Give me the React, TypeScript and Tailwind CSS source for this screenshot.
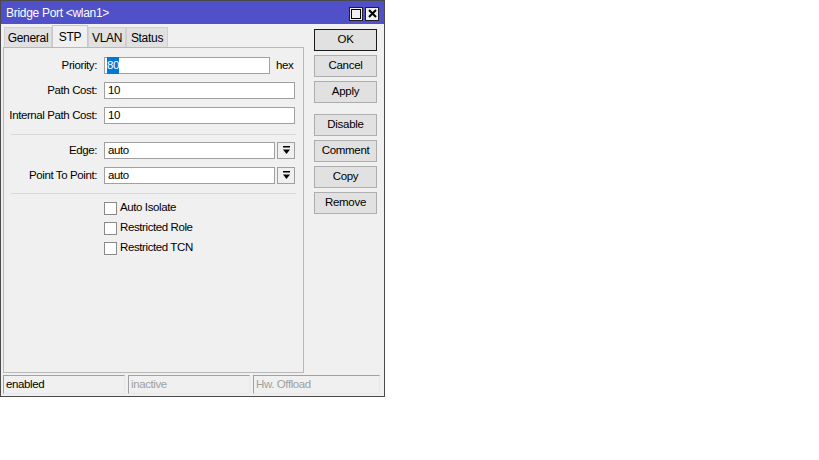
import React from "react";

const font = { fontFamily: '"Liberation Sans", Arial, sans-serif' };

function Drop() {
  return (
    <div className="w-[18px] h-[17px] border border-[#a0a0a0] bg-[#f0f0f0] flex items-center justify-center">
      <svg width="9" height="9" viewBox="0 0 9 9">
        <rect x="1" y="0" width="7" height="1.5" fill="#000" />
        <path d="M1 3.5 H8 L4.5 8 Z" fill="#000" />
      </svg>
    </div>
  );
}

function Btn({ label, def }: { label: string; def?: boolean }) {
  return (
    <div
      className={`h-[22px] w-[63px] flex items-center justify-center bg-[#e1e1e1] border ${
        def ? "border-[#1a1a1a]" : "border-[#adadad]"
      } text-[11.5px] tracking-[-0.3px] text-black`}
    >
      {label}
    </div>
  );
}

function Check({ label }: { label: string }) {
  return (
    <div className="flex items-center h-[20px] pl-[100px]">
      <div className="w-[13px] h-[13px] border border-[#8a8a8a] bg-white" />
      <span className="ml-[3px] text-[11.5px] tracking-[-0.4px]">{label}</span>
    </div>
  );
}

export default function App() {
  return (
    <div className="w-[819px] h-[460px] bg-white relative" style={font}>
      <div className="w-[385px] h-[397px] bg-[#f0f0f0] border border-[#4a4a4a] flex flex-col">
        {/* title bar */}
        <div className="h-[23px] bg-[#5050c8] flex items-center pl-[5px] pr-[5px]">
          <span className="text-white text-[12px] tracking-[-0.3px] flex-1">Bridge Port &lt;wlan1&gt;</span>
          <div className="flex gap-[2px] mt-[2px]">
            <div className="w-[14px] h-[14px] bg-[#f0f0f0] border border-[#202020] flex items-center justify-center">
              <div className="w-[10px] h-[10px] border border-black" />
            </div>
            <div className="w-[14px] h-[14px] bg-[#f0f0f0] border border-[#202020] flex items-center justify-center">
              <svg width="9" height="9" viewBox="0 0 9 9">
                <path d="M1 1 L8 8 M8 1 L1 8" stroke="#000" strokeWidth="2" />
              </svg>
            </div>
          </div>
        </div>
        {/* body */}
        <div className="flex flex-1 pl-[2px]">
          <div className="flex flex-col w-[301px]">
            <div className="flex items-end h-[23px] pl-[1px] text-[12px] tracking-[-0.3px]">
              <div className="h-[20px] w-[48px] flex items-center justify-center bg-[#e1e1e1] border border-b-0 border-[#d0d0d0]">General</div>
              <div className="h-[22px] w-[36px] flex items-center justify-center bg-[#f0f0f0] border border-b-0 border-[#c8c8c8]">STP</div>
              <div className="h-[20px] w-[38px] flex items-center justify-center bg-[#e1e1e1] border border-b-0 border-[#d0d0d0]">VLAN</div>
              <div className="h-[20px] w-[42px] flex items-center justify-center bg-[#e1e1e1] border border-b-0 border-[#d0d0d0]">Status</div>
            </div>
            <div className="h-[326px] border border-[#b8b8b8] bg-[#f0f0f0] pt-[9px] text-[11.5px] tracking-[-0.4px] text-black">
              <div className="flex items-center h-[17px]">
                <div className="w-[94px] text-right pr-[1px]">Priority:</div>
                <div className="ml-[6px] w-[166px] h-[17px] bg-white border border-[#a0a0a0] flex items-center pl-[2px]">
                  <span className="bg-[#0078d7] text-white">80</span>
                </div>
                <span className="ml-[6px]">hex</span>
              </div>
              <div className="flex items-center h-[17px] mt-[8px]">
                <div className="w-[94px] text-right pr-[1px]">Path Cost:</div>
                <div className="ml-[6px] w-[191px] h-[17px] bg-white border border-[#a0a0a0] flex items-center pl-[3px]">10</div>
              </div>
              <div className="flex items-center h-[17px] mt-[8px]">
                <div className="w-[94px] text-right pr-[1px]">Internal Path Cost:</div>
                <div className="ml-[6px] w-[191px] h-[17px] bg-white border border-[#a0a0a0] flex items-center pl-[3px]">10</div>
              </div>
              <div className="ml-[7px] w-[285px] h-px bg-[#d7d7d7] mt-[10px]" />
              <div className="flex items-center h-[17px] mt-[7px]">
                <div className="w-[94px] text-right pr-[1px]">Edge:</div>
                <div className="ml-[6px] w-[171px] h-[17px] bg-white border border-[#a0a0a0] flex items-center pl-[3px]">auto</div>
                <div className="ml-[2px]"><Drop /></div>
              </div>
              <div className="flex items-center h-[17px] mt-[8px]">
                <div className="w-[94px] text-right pr-[1px]">Point To Point:</div>
                <div className="ml-[6px] w-[171px] h-[17px] bg-white border border-[#a0a0a0] flex items-center pl-[3px]">auto</div>
                <div className="ml-[2px]"><Drop /></div>
              </div>
              <div className="ml-[7px] w-[285px] h-px bg-[#d7d7d7] mt-[9px]" />
              <div className="mt-[4px]">
                <Check label="Auto Isolate" />
                <Check label="Restricted Role" />
                <Check label="Restricted TCN" />
              </div>
            </div>
          </div>
          <div className="ml-[10px] pt-[5px] flex flex-col gap-[4px]">
            <Btn label="OK" def />
            <Btn label="Cancel" />
            <Btn label="Apply" />
            <div className="h-[3px]" />
            <Btn label="Disable" />
            <Btn label="Comment" />
            <Btn label="Copy" />
            <Btn label="Remove" />
          </div>
        </div>
        {/* status bar */}
        <div className="flex gap-[3px] pl-[2px] pb-[2px] text-[11.5px] tracking-[-0.4px]">
          <div className="w-[122px] h-[19px] border border-[#a0a0a0] border-r-[#e8e8e8] border-b-[#e8e8e8] flex items-center pl-[2px] text-black">enabled</div>
          <div className="w-[122px] h-[19px] border border-[#a0a0a0] border-r-[#e8e8e8] border-b-[#e8e8e8] flex items-center pl-[2px] text-[#a0a0a0]">inactive</div>
          <div className="w-[127px] h-[19px] border border-[#a0a0a0] border-r-[#e8e8e8] border-b-[#e8e8e8] flex items-center pl-[2px] text-[#a0a0a0]">Hw. Offload</div>
        </div>
      </div>
    </div>
  );
}
